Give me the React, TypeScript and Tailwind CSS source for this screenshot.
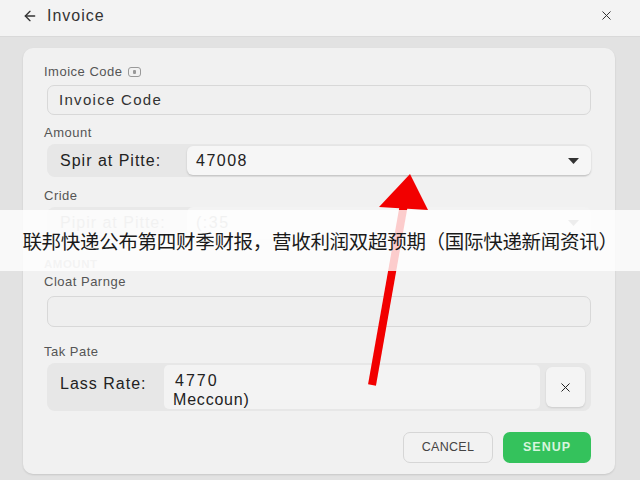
import React from 'react';
import { ArrowLeft, X } from 'lucide-react';

const Label: React.FC<{ text: string; className?: string; children?: React.ReactNode }> = ({ text, className = '', children }) => (
  <div className={`h-[14px] leading-[14px] text-[13px] tracking-[0.5px] text-[#555] flex items-center gap-1.5 ${className}`}>
    <span>{text}</span>
    {children}
  </div>
);

const Caret = ({ faded = false }: { faded?: boolean }) => (
  <svg width="11" height="6" viewBox="0 0 11 6" className={faded ? 'opacity-40' : ''}>
    <path d="M0 0h11L5.5 6z" fill="#333" />
  </svg>
);

const App: React.FC = () => {
  return (
    <div className="relative w-[640px] h-[480px] overflow-hidden bg-[#e2e2e2] font-['Liberation_Sans',Arial,sans-serif] text-[#333]">
      {/* header */}
      <div className="h-[37px] bg-[#f3f3f3] border-b border-[#d9d9d9] flex items-center justify-between pl-[22px] pr-[26px] pb-[5px]">
        <div className="flex items-center gap-[9px]">
          <ArrowLeft size={16} strokeWidth={2} className="text-[#333]" />
          <span className="text-[16px] tracking-[1px] text-[#333]">Invoice</span>
        </div>
        <X size={15} strokeWidth={1.6} className="text-[#333]" />
      </div>

      <div className="px-[23px] pt-[11px] pr-[25px]">
        <div className="h-[426px] rounded-[10px] bg-[#f1f1f1] shadow-[0_1px_2px_rgba(0,0,0,0.12)] pl-[21px] pr-[24px] pt-[17px]">
          <Label text="Imoice Code" className="text-[12px]">
            <span className="inline-flex items-center justify-center w-[13px] h-[10px] rounded-[3px] border border-[#999]">
              <span className="w-[3px] h-[4px] bg-[#999] rounded-[1px]" />
            </span>
          </Label>
          <div className="ml-[3px] mt-[6px] h-[30px] rounded-[7px] border border-[#d8d8d8] bg-[#f0f0f0] flex items-center pl-[11px] text-[15px] tracking-[1.3px] text-[#333]">
            Invoice Code
          </div>

          <Label text="Amount" className="mt-[11px] text-[#444]" />
          <div className="ml-[3px] mt-[4px] h-[33px] rounded-[8px] bg-[#e7e7e7] flex items-stretch">
            <div className="w-[140px] flex items-center pl-[13px] text-[16px] tracking-[1px] text-[#222] font-medium">Spir at Pitte:</div>
            <div className="flex-1 my-[2px] rounded-[6px] bg-[#f6f6f6] shadow-[0_1px_2px_rgba(0,0,0,0.18)] flex items-center justify-between pl-[9px] pr-[12px] text-[16px] tracking-[1.5px] text-[#222]">
              <span>47008</span>
              <Caret />
            </div>
          </div>

          <Label text="Cride" className="mt-[12px] text-[#444]" />
          <div className="ml-[3px] mt-[4px] h-[32px] rounded-[8px] bg-[#e9e9e9] flex items-stretch">
            <div className="w-[140px] flex items-center pl-[13px] text-[16px] tracking-[1px] text-[#bbb]">Pipir at Pitte:</div>
            <div className="flex-1 rounded-[6px] bg-[#f3f3f3] flex items-center justify-between pl-[9px] pr-[12px] text-[16px] tracking-[1.5px] text-[#bbb]">
              <span>(:35</span>
              <Caret faded />
            </div>
          </div>

          <div className="mt-[18px] h-[14px] leading-[14px] text-[11.5px] font-bold tracking-[0.5px] text-[#c4c4c4]">AMOUNT</div>
          <Label text="Cloat Parnge" className="mt-[4px] text-[#444]" />
          <div className="ml-[3px] mt-[7px] h-[31px] rounded-[7px] border border-[#d8d8d8] bg-[#efefef]" />

          <Label text="Tak Pate" className="mt-[18px] text-[#444]" />
          <div className="ml-[3px] mt-[4px] h-[48px] rounded-[8px] bg-[#e7e7e7] flex items-stretch">
            <div className="w-[117px] flex items-start pt-[9px] pl-[13px] text-[16px] tracking-[1px] text-[#222] font-medium">Lass Rate:</div>
            <div className="w-[376px] my-[2px] rounded-[5px] bg-[#f3f3f3] flex flex-col justify-center pl-[10px] pt-[5px] text-[16px] leading-[19px] text-[#222]">
              <span className="pl-[1px] tracking-[2px]">4770</span>
              <span className="-ml-[1px] tracking-[0.8px]">Meccoun)</span>
            </div>
            <div className="flex-1 flex items-center justify-center">
              <div className="w-[39px] h-[40px] rounded-[6px] bg-[#f4f4f4] shadow-[0_1px_2px_rgba(0,0,0,0.12)] flex items-center justify-center">
                <X size={15} strokeWidth={1.6} className="text-[#222]" />
              </div>
            </div>
          </div>

          <div className="mt-[21px] flex justify-end gap-[10px]">
            <button className="w-[90px] h-[31px] rounded-[7px] border border-[#d6d6d6] bg-[#f2f2f2] text-[12.5px] text-[#444] tracking-wide">CANCEL</button>
            <button className="w-[88px] h-[31px] rounded-[7px] bg-[#34c25c] text-[12.5px] text-[#d8f5de] font-bold tracking-[1px]">SENUP</button>
          </div>
        </div>
      </div>

      {/* red arrow annotation */}
      <svg className="absolute inset-0 pointer-events-none" width="640" height="480" viewBox="0 0 640 480">
        <line x1="372" y1="385" x2="404" y2="204" stroke="#f20000" strokeWidth="8" />
        <path d="M410 174 L379 207 L428 210 Z" fill="#f20000" />
      </svg>

      {/* caption banner */}
      <div className="absolute left-0 top-[210px] w-[640px] h-[61px] bg-white/80 flex items-center justify-center">
        <span className="text-[19.5px] text-[#1a1a1a] font-['Noto_Sans_CJK_SC','Noto_Sans_CJK_JP',sans-serif] tracking-[-0.3px]">
          联邦快递公布第四财季财报，营收利润双超预期（国际快递新闻资讯）
        </span>
      </div>
    </div>
  );
};

export default App;
